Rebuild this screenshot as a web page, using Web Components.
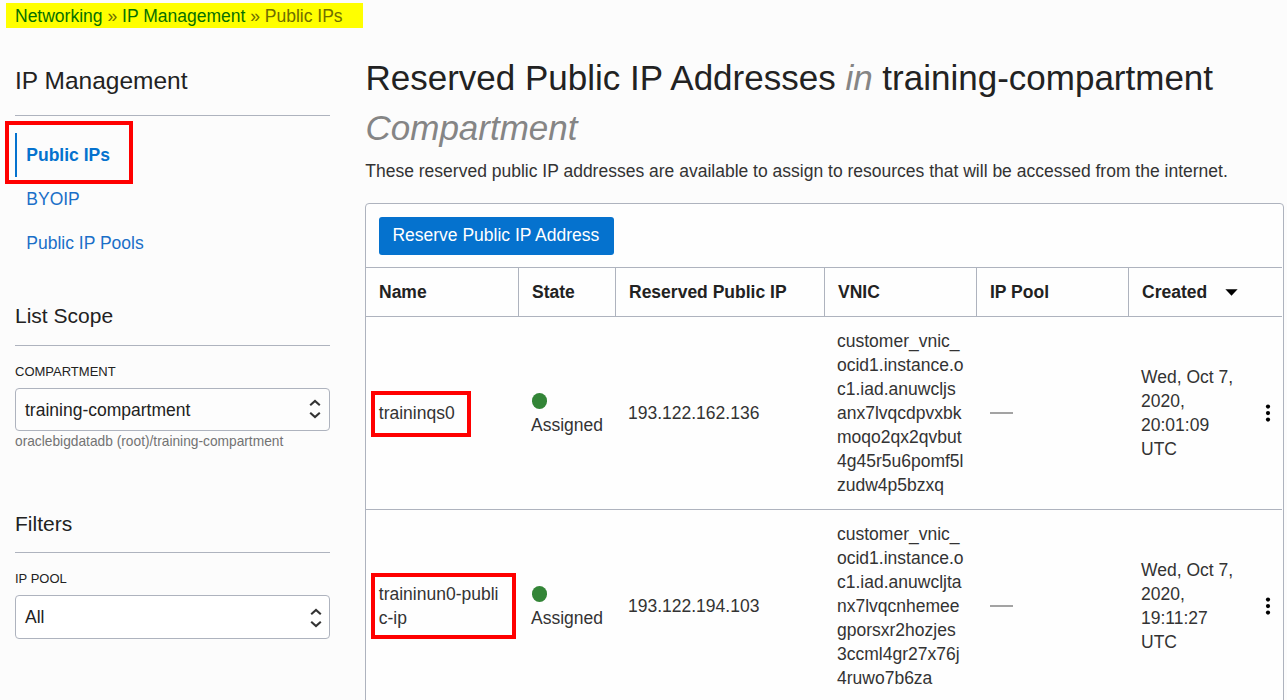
<!DOCTYPE html>
<html lang="en">
<head>
<meta charset="utf-8">
<title>Reserved Public IP Addresses</title>
<style>
  html { background: #fcfcfc; }
  body { margin: 0; height: 700px; overflow: hidden; font: 17.5px/24px "Liberation Sans", Arial, sans-serif; color: #333; }
</style>
</head>
<body>
<ip-console></ip-console>
<script>
const define = (name, html, setup) => {
  const t = document.createElement('template');
  t.innerHTML = html;
  customElements.define(name, class extends HTMLElement {
    constructor() {
      super();
      this.attachShadow({ mode: 'open' }).append(t.content.cloneNode(true));
    }
    connectedCallback() { if (setup) setup.call(this, this.shadowRoot); }
  });
};

define('bread-crumbs', `<style>
  :host { display: flex; gap: 4.9px; box-sizing: border-box; width: 357px; height: 25px; margin: 3px 0 0 6px; padding-left: 9px;
    background: #ff0; color: #6f6e00; line-height: 26px; white-space: nowrap; }
  a { color: #067000; }
</style><a>Networking</a><span>»</span><a>IP Management</a><span>»</span><span>Public IPs</span>`);

define('side-heading', `<style>
  :host { display: block; box-sizing: border-box; color: #222; border-bottom: 1px solid #aeb3be; font-size: 21px; line-height: 28px; height: 44px; white-space: nowrap; }
  :host([large]) { font-size: 24.5px; height: 50px; line-height: 30px; }
</style><slot></slot>`);

define('mark-box', `<style>
  :host { position: absolute; box-sizing: border-box; border: 4px solid #f00; pointer-events: none; }
</style>`);

define('nav-item', `<style>
  :host { display: block; position: relative; height: 44px; line-height: 44px; padding-left: 11.3px; color: #1a6fc8; white-space: nowrap; }
  :host([active]) { border-left: 2px solid #0572ce; padding-left: 9.3px; font-weight: bold; color: #0572ce; }
</style><slot></slot>`);

define('select-field', `<style>
  :host { display: block; color: #222; white-space: nowrap; }
  .label { font-size: 13px; line-height: 18px; }
  .box { display: flex; align-items: center; justify-content: space-between; box-sizing: border-box; height: 43px; margin-top: 7px;
    padding: 0 8.5px 0 9px; border: 1px solid #aeb3be; border-radius: 4px; background: #fdfdfd; }
  :host([tall]) .box { background: #fff; height: 44px; margin-top: 7px; padding-right: 7.5px; }
  .help { font-size: 13.75px; line-height: 22px; height: 20px; color: #737373; }
  svg { display: block; position: relative; top: -1px; }
  :host([tall]) svg { margin-top: 3px; }
</style><div class="label"></div>
<div class="box"><slot></slot><svg width="12" height="20" viewBox="0 0 12 20" fill="none" stroke="#333" stroke-width="2.1"><path d="M1.2 6.2 6 1.9l4.8 4.3M1.2 13.8 6 18.1l4.8-4.3"/></svg></div>
<div class="help"></div>`, function (r) {
  r.querySelector('.label').textContent = this.getAttribute('label');
  const h = r.querySelector('.help');
  if (this.hasAttribute('help')) h.textContent = this.getAttribute('help'); else h.remove();
});

define('side-panel', `<style>
  :host { display: block; width: 315px; }
  nav { margin-top: 17px; }
  section { margin-top: 37px; }
  section + section { margin-top: 59px; }
  section + section side-heading { height: 43px; }
  select-field { margin-top: 17px; }
  mark-box { left: -12px; top: -12px; width: 128px; height: 63px; }
</style>
<side-heading large>IP Management</side-heading>
<nav><nav-item active>Public IPs<mark-box></mark-box></nav-item><nav-item>BYOIP</nav-item><nav-item>Public IP Pools</nav-item></nav>
<section><side-heading>List Scope</side-heading>
<select-field label="COMPARTMENT" help="oraclebigdatadb (root)/training-compartment">training-compartment</select-field></section>
<section><side-heading>Filters</side-heading><select-field tall label="IP POOL">All</select-field></section>`);

define('action-button', `<style>
  :host { display: block; box-sizing: border-box; width: 235px; height: 38px; line-height: 36px; padding-left: 13.4px; border-radius: 3px; background: #0572ce; color: #fff; white-space: nowrap; }
</style><slot></slot>`);

define('head-row', `<style>
  :host { display: grid; grid-template-columns: var(--cols); height: 48px; line-height: 49px; border: solid #aeb3be; border-width: 1px 0; font-weight: bold; color: #222; }
  span { padding-left: 13px; white-space: nowrap; border-right: 1px solid #aeb3be; }
  span:last-child { border: 0; display: flex; align-items: center; gap: 18px; }
</style><span>Name</span><span>State</span><span>Reserved Public IP</span><span>VNIC</span><span>IP Pool</span><span>Created
<svg width="13" height="7" viewBox="0 0 13 7"><path d="M.4.3h12.2L6.5 6.7z" fill="#000"/></svg></span>`);

define('ip-row', `<style>
  :host { display: grid; grid-template-columns: var(--cols); align-items: center; height: 192px; border-bottom: 1px solid #aeb3be; }
  div { padding-left: 12px; white-space: pre-line; }
  .name { position: relative; padding-left: 12.8px; }
  i { display: block; width: 15.5px; height: 15.5px; margin: 4px 0 4.5px .7px; border-radius: 50%; background: #338537; }
  b { display: block; width: 23px; height: 2px; margin-left: 1px; background: #a3a3a3; }
  .created { display: flex; justify-content: space-between; align-items: center; padding-right: 11px; }
</style>
<div class="name"><slot name="name"></slot></div><div class="state"><i></i>Assigned</div><div><slot name="address"></slot></div>
<div><slot name="vnic"></slot></div><div><b></b></div>
<div class="created"><slot name="created"></slot><svg width="6" height="18" viewBox="0 0 6 18"><circle cx="3" cy="2.6" r="2.1"/><circle cx="3" cy="9.1" r="2.1"/><circle cx="3" cy="15.6" r="2.1"/></svg></div>`);

define('ip-table', `<style>
  :host { display: block; --cols: 153px 97px 209px 152px 152px 153px; box-sizing: border-box; width: 919px; height: 520px; padding-right: 1px;
    border: 1px solid #aeb3be; border-radius: 4px; background: #fefefe; }
  .bar { height: 50px; padding: 13px 0 0 13px; }
  mark-box { left: 5px; top: -10px; width: 100px; height: 46px; }
  .two { top: -9px; width: 145px; height: 66px; }
</style>
<div class="bar"><action-button>Reserve Public IP Address</action-button></div>
<head-row></head-row>
<ip-row><span slot="name">traininqs0<mark-box></mark-box></span><span slot="address">193.122.162.136</span>
<span slot="vnic">customer_vnic_<br>ocid1.instance.o<br>c1.iad.anuwcljs<br>anx7lvqcdpvxbk<br>moqo2qx2qvbut<br>4g45r5u6pomf5l<br>zudw4p5bzxq</span>
<span slot="created">Wed, Oct 7,<br>2020,<br>20:01:09<br>UTC</span></ip-row>
<ip-row><span slot="name">traininun0-publi<br>c-ip<mark-box class="two"></mark-box></span><span slot="address">193.122.194.103</span>
<span slot="vnic">customer_vnic_<br>ocid1.instance.o<br>c1.iad.anuwcljta<br>nx7lvqcnhemee<br>gporsxr2hozjes<br>3ccml4gr27x76j<br>4ruwo7b6za</span>
<span slot="created">Wed, Oct 7,<br>2020,<br>19:11:27<br>UTC</span></ip-row>`);

define('page-title', `<style>
  :host { display: block; padding-left: .5px; font-size: 35px; line-height: 50px; color: #222; white-space: nowrap; }
  em { color: #858585; }
</style>Reserved Public IP Addresses <em>in</em> training-compartment<br><em>Compartment</em>`);

define('ip-console', `<style>
  :host { display: block; }
  .cols { display: grid; grid-template-columns: 315px 919px; column-gap: 35px; padding-left: 15px; align-items: start; }
  side-panel { margin-top: 38px; }
  main { margin-top: 25px; }
  p { margin: 6px 0 20px; padding-left: .3px; white-space: nowrap; }
</style><bread-crumbs></bread-crumbs>
<div class="cols"><side-panel></side-panel>
<main><page-title></page-title><p>These reserved public IP addresses are available to assign to resources that will be accessed from the internet.</p><ip-table></ip-table></main></div>`);
</script>
</body>
</html>
